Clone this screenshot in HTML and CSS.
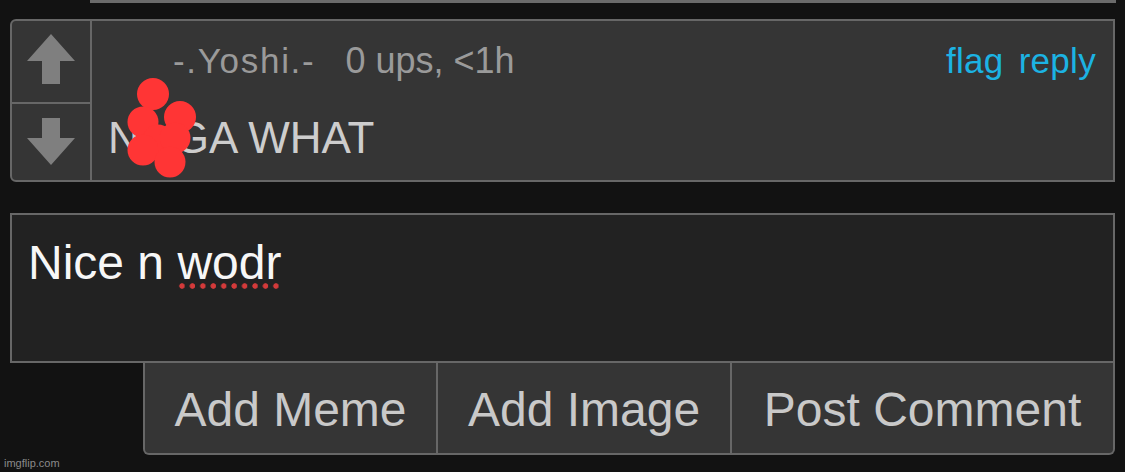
FILE: index.html
```html
<!DOCTYPE html>
<html>
<head>
<meta charset="utf-8">
<link rel="stylesheet" href="styles.css">
</head>
<body>
<div class="page">
  <div class="prev"></div>
  <div class="comment">
    <div class="vote">
      <div class="vote-btn up">
        <svg width="48" height="50" viewBox="0 0 48 50"><polygon points="24,0 48,27 33,27 33,50 15,50 15,27 0,27" fill="#7f7f7f"/></svg>
      </div>
      <div class="vote-btn down">
        <svg width="48" height="47" viewBox="0 0 48 47"><polygon points="15,0 33,0 33,20 48,20 24,47 0,20 15,20" fill="#7f7f7f"/></svg>
      </div>
    </div>
    <div class="c-body">
      <div class="c-head">
        <span class="user">-.Yoshi.-</span>
        <span class="meta">0 ups, &lt;1h</span>
        <span class="actions"><a class="act">flag</a><a class="act">reply</a></span>
      </div>
      <div class="c-text">N<span class="censor"></span>GA WHAT</div>
    </div>
    <svg class="scribble" width="90" height="110" viewBox="0 0 90 110">
      <g fill="#ff3535">
        <circle cx="43" cy="19" r="16"/>
        <circle cx="70" cy="42" r="16"/>
        <circle cx="33" cy="47" r="15.5"/>
        <circle cx="48" cy="65" r="15.5"/>
        <circle cx="65" cy="63" r="15.5"/>
        <circle cx="33" cy="75" r="15.5"/>
        <circle cx="60" cy="87" r="15.5"/>
      </g>
    </svg>
  </div>
  <div class="compose">
    <div class="textarea">Nice n <span class="typo">wodr</span></div>
    <div class="buttons">
      <div class="btn b1">Add Meme</div>
      <div class="btn b2">Add Image</div>
      <div class="btn b3">Post Comment</div>
    </div>
  </div>
  <div class="watermark">imgflip.com</div>
</div>
</body>
</html>
```
FILE: styles.css
```css
html, body {
  margin: 0;
  padding: 0;
  background: #121212;
  height: 472px;
  overflow: hidden;
}
.page {
  position: relative;
  height: 472px;
  width: 1105px;
  padding: 0 10px;
  font-family: "Liberation Sans", Arial, Helvetica, sans-serif;
}
.prev {
  height: 3px;
  margin-left: 80px;
  margin-right: -1px;
  background: #6b6b6b;
}
.comment {
  position: relative;
  margin-top: 16px;
  height: 163px;
  box-sizing: border-box;
  border: 2px solid #676767;
  border-radius: 6px 0 0 6px;
  background: #353535;
  display: flex;
}
.vote {
  width: 78px;
  border-right: 2px solid #676767;
  display: flex;
  flex-direction: column;
}
.vote-btn {
  flex: 1;
  display: flex;
  align-items: center;
  justify-content: center;
}
.vote-btn.up {
  border-bottom: 2px solid #676767;
  padding-bottom: 4px;
}
.c-body {
  flex: 1;
  padding-left: 16px;
  padding-top: 20px;
}
.c-head {
  display: flex;
  align-items: baseline;
  font-size: 35px;
  line-height: 40px;
  height: 40px;
  color: #9a9a9a;
}
.user {
  margin-left: 65px;
  letter-spacing: 1.7px;
}
.meta {
  margin-left: 30px;
  font-size: 36px;
}
.actions {
  margin-left: auto;
  padding-right: 17px;
  display: flex;
  gap: 15px;
}
.act {
  color: #1cb3e3;
  letter-spacing: 0.3px;
}
.c-text {
  margin-top: 32px;
  font-size: 44px;
  line-height: 50px;
  color: #cdcdcd;
}
.censor {
  display: inline-block;
  width: 35px;
}
.scribble {
  position: absolute;
  left: 98px;
  top: 54px;
}
.compose {
  margin-top: 31px;
}
.textarea {
  height: 150px;
  box-sizing: border-box;
  border: 2px solid #676767;
  background: #222222;
  padding: 21px 16px 0;
  font-size: 48px;
  line-height: 54px;
  color: #f7f7f7;
}
.typo {
  background-image: radial-gradient(circle at center, #d43a3a 0, #d43a3a 2.4px, rgba(212,58,58,0) 3.1px);
  background-size: 10px 6px;
  background-repeat: space no-repeat;
  background-position: 0 100%;
}
.buttons {
  margin-left: 133px;
  height: 92px;
  box-sizing: border-box;
  border: 2px solid #676767;
  border-top: none;
  border-radius: 0 0 6px 6px;
  background: #353535;
  display: flex;
}
.btn {
  text-align: center;
  font-size: 48px;
  line-height: 90px;
  padding-top: 2px;
  box-sizing: border-box;
  color: #c9c9c9;
}
.b1 {
  flex: 0 0 293px;
  border-right: 2px solid #676767;
}
.b2 {
  flex: 0 0 294px;
  border-right: 2px solid #676767;
}
.b3 {
  flex: 1;
}
.watermark {
  position: absolute;
  left: 4px;
  top: 456px;
  font-size: 11px;
  line-height: 14px;
  color: #8a8a8a;
}
```
